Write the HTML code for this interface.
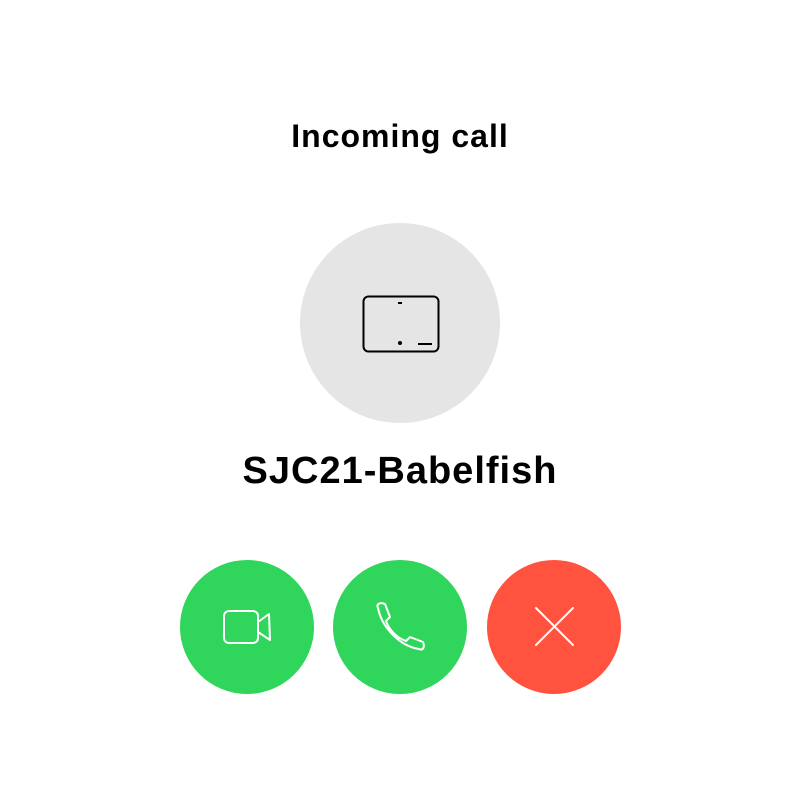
<!DOCTYPE html>
<html><head><style>
body{margin:0;width:800px;height:800px;background:#fff;font-family:"Liberation Sans",sans-serif;position:relative;overflow:hidden}
.t{position:absolute;left:0;width:800px;text-align:center;font-weight:bold;color:#000}
.c{position:absolute;border-radius:50%}
</style></head><body>
<div class="t" style="top:118px;font-size:32px;letter-spacing:1px">Incoming call</div>
<div class="c" style="left:300px;top:223px;width:200px;height:200px;background:#e5e5e5"></div>
<svg style="position:absolute;left:0;top:0" width="800" height="800">
<rect x="363.5" y="296.5" width="75" height="55" rx="5" fill="none" stroke="#000" stroke-width="2"/>
<line x1="398" y1="303" x2="402" y2="303" stroke="#000" stroke-width="2"/>
<circle cx="400" cy="343" r="2" fill="#000"/>
<line x1="418" y1="344" x2="432" y2="344" stroke="#000" stroke-width="2"/>
</svg>
<div class="t" style="top:450px;font-size:38px;letter-spacing:1px">SJC21-Babelfish</div>
<div class="c" style="left:180px;top:560px;width:134px;height:134px;background:#30d55b"></div>
<div class="c" style="left:333px;top:560px;width:134px;height:134px;background:#30d55b"></div>
<div class="c" style="left:487px;top:560px;width:134px;height:134px;background:#ff523f"></div>
<svg style="position:absolute;left:0;top:0" width="800" height="800" fill="none" stroke="#fff" stroke-width="2" stroke-linejoin="round" stroke-linecap="round">
<rect x="224" y="611" width="34" height="32" rx="5"/>
<path d="M258 622 L269 614 L270 640 L258 632"/>
<path d="M378 608 C376 604 380 602 385 604 L390 617 L386 621 C389 630 397 638 406 641 L410 637 L423 642 C425 647 423 651 419 649 C400 646 382 628 378 608 Z"/>
<line x1="536" y1="608" x2="573" y2="645"/>
<line x1="573" y1="608" x2="536" y2="645"/>
</svg>
</body></html>
